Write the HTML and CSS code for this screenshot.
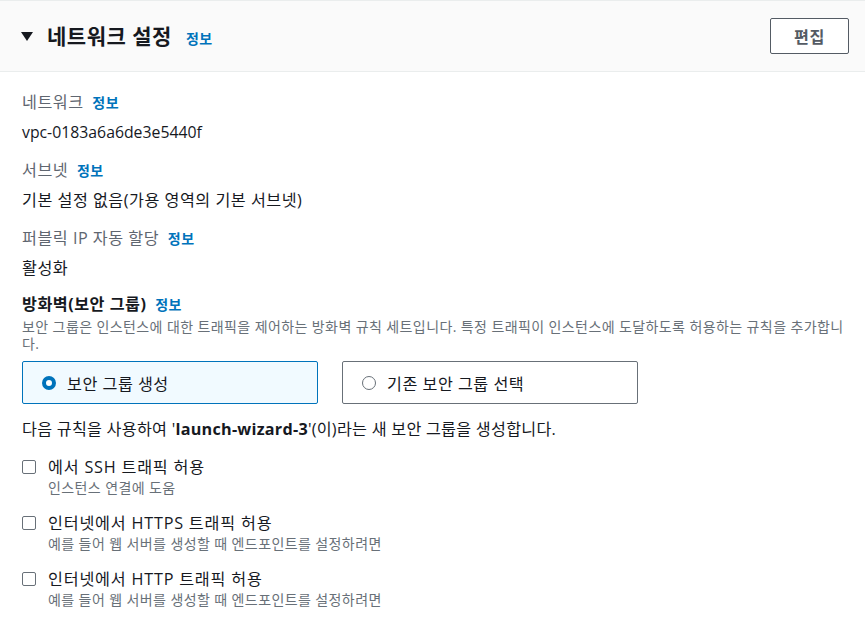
FILE: index.html
```html
<!DOCTYPE html>
<html lang="ko">
<head>
<meta charset="utf-8">
<link rel="stylesheet" href="styles.css">
</head>
<body>
<section class="panel">
  <header class="panel-header">
    <div class="title-wrap">
      <span class="caret"></span>
      <h2 class="title">네트워크 설정</h2>
      <a class="info">정보</a>
    </div>
    <button class="btn">편집</button>
  </header>
  <div class="panel-body">
    <div class="field">
      <div class="label">네트워크 <a class="info">정보</a></div>
      <div class="value mono-ish">vpc-0183a6a6de3e5440f</div>
    </div>
    <div class="field">
      <div class="label">서브넷 <a class="info">정보</a></div>
      <div class="value">기본 설정 없음(가용 영역의 기본 서브넷)</div>
    </div>
    <div class="field">
      <div class="label">퍼블릭 IP 자동 할당 <a class="info">정보</a></div>
      <div class="value">활성화</div>
    </div>
    <div class="field fw">
      <div class="label strong">방화벽(보안 그룹) <a class="info">정보</a></div>
      <div class="desc">보안 그룹은 인스턴스에 대한 트래픽을 제어하는 방화벽 규칙 세트입니다. 특정 트래픽이 인스턴스에 도달하도록 허용하는 규칙을 추가합니다.</div>
      <div class="tiles">
        <div class="tile selected"><span class="radio on"></span><span>보안 그룹 생성</span></div>
        <div class="tile"><span class="radio"></span><span>기존 보안 그룹 선택</span></div>
      </div>
    </div>
    <p class="note">다음 규칙을 사용하여 '<b>launch-wizard-3</b>'(이)라는 새 보안 그룹을 생성합니다.</p>
    <div class="checks">
      <div class="check">
        <span class="box"></span>
        <div>
          <div class="check-label">에서 SSH 트래픽 허용</div>
          <div class="check-desc">인스턴스 연결에 도움</div>
        </div>
      </div>
      <div class="check">
        <span class="box"></span>
        <div>
          <div class="check-label">인터넷에서 HTTPS 트래픽 허용</div>
          <div class="check-desc">예를 들어 웹 서버를 생성할 때 엔드포인트를 설정하려면</div>
        </div>
      </div>
      <div class="check">
        <span class="box"></span>
        <div>
          <div class="check-label">인터넷에서 HTTP 트래픽 허용</div>
          <div class="check-desc">예를 들어 웹 서버를 생성할 때 엔드포인트를 설정하려면</div>
        </div>
      </div>
    </div>
  </div>
</section>
</body>
</html>
```

FILE: styles.css
```css
* { box-sizing: border-box; }
html, body { margin: 0; padding: 0; background: #fff; }
body {
  font-family: "Open Sans", "Noto Sans CJK KR", sans-serif;
  font-size: 16.2px;
  letter-spacing: 0.5px;
  color: #16191f;
}
.panel { width: 865px; }
.panel-header {
  height: 72px;
  background: #fafafa;
  border-top: 1px solid #eaeded;
  border-bottom: 1px solid #eaeded;
  display: flex;
  align-items: center;
  justify-content: space-between;
  padding: 0 16px 0 21px;
}
.title-wrap { display: flex; align-items: center; }
.caret {
  width: 0; height: 0;
  border-left: 6px solid transparent;
  border-right: 6px solid transparent;
  border-top: 9px solid #16191f;
  margin-right: 14px;
  margin-top: 1px;
}
.title {
  margin: 0;
  font-size: 21px;
  font-weight: 700;
  line-height: 26px;
  letter-spacing: 0.5px;
}
.info {
  color: #0073bb;
  font-weight: 700;
  font-size: 14px;
  letter-spacing: 0.5px;
  text-decoration: none;
  margin-left: 6px;
}
.title-wrap .info { margin-left: 14px; margin-top: 3px; }
.btn {
  width: 79px;
  height: 36px;
  background: #fff;
  border: 1px solid #545b64;
  border-radius: 2px;
  color: #545b64;
  font-family: inherit;
  font-weight: 700;
  font-size: 16.2px;
  letter-spacing: 0.5px;
}
.panel-body { padding: 19px 16px 0 22px; }
.field { margin-bottom: 16px; }
.label {
  color: #5f6670;
  line-height: 22px;
  height: 22px;
}
.label .info { margin-left: 4px; }
.value { margin-top: 8px; line-height: 22px; height: 22px; }
.value.mono-ish { font-size: 15.8px; letter-spacing: 0; }
.label.strong { color: #16191f; font-weight: 700; line-height: 18px; height: 18px; }
.fw { margin-bottom: 0; }
.desc {
  color: #687078;
  font-size: 14px;
  letter-spacing: 0.4px;
  line-height: 17px;
  height: 34px;
  margin-top: 5px;
}
.tiles { display: flex; gap: 24px; margin-top: 9px; }
.tile {
  width: 296px;
  height: 43px;
  border: 1px solid #687078;
  border-radius: 2px;
  display: flex;
  align-items: center;
  padding-left: 19px;
  gap: 11px;
  background: #fff;
}
.tile.selected { background: #f1faff; border-color: #0073bb; }
.radio {
  width: 14px; height: 14px;
  border-radius: 50%;
  border: 1.5px solid #687078;
  background: #fff;
  flex: none;
}
.radio.on { border: 4.5px solid #0073bb; }
.note { margin: 14px 0 16px; line-height: 22px; height: 22px; letter-spacing: 0.25px; }
.note b { font-weight: 700; }
.checks { display: flex; flex-direction: column; gap: 15px; }
.check { display: flex; align-items: flex-start; gap: 12px; }
.box {
  width: 14px; height: 14px;
  border: 1px solid #687078;
  border-radius: 2px;
  margin-top: 4px;
  flex: none;
  background: #fff;
}
.check-label { line-height: 22px; height: 22px; letter-spacing: 0.8px; }
.check-desc { color: #687078; font-size: 14px; letter-spacing: 0.4px; line-height: 18px; height: 18px; margin-top: 1px; }
```
